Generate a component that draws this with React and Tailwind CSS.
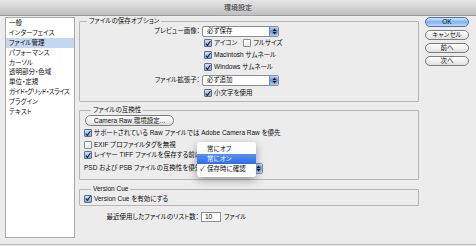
import React from 'react';

const FONT = "font-['Liberation_Sans','Noto_Sans_CJK_JP',sans-serif] [font-feature-settings:'palt']";

function Box({ on }) {
  return (
    <span
      className={
        on
          ? 'w-[8px] h-[8px] shrink-0 rounded-[1px] border border-[#5d6f8c] bg-gradient-to-b from-[#cfe1f7] to-[#7ea8dc] flex items-center justify-center'
          : 'w-[8px] h-[8px] shrink-0 rounded-[1px] border border-[#8a8a8a] bg-gradient-to-b from-white to-[#e8e8e8]'
      }
    >
      {on && (
        <svg width="7" height="7" viewBox="0 0 7 7">
          <path d="M1 3.6 L2.8 5.6 L6.4 0.6" fill="none" stroke="#1b2233" strokeWidth="1.3" />
        </svg>
      )}
    </span>
  );
}

function Check({ on, label, className = '' }) {
  return (
    <div className={`flex items-center gap-[2px] whitespace-nowrap ${className}`}>
      <Box on={on} />
      <span>{label}</span>
    </div>
  );
}

function Stepper() {
  return (
    <span className="ml-auto w-[9px] h-full shrink-0 rounded-r-[2px] bg-gradient-to-b from-[#b5d2f5] via-[#5d9be8] to-[#a9cdf6] border-l border-[#6a88b3] flex items-center justify-center">
      <svg width="5" height="7" viewBox="0 0 5 7">
        <path d="M2.5 0.5 L4.5 3 L0.5 3 Z" fill="#111" />
        <path d="M2.5 6.5 L4.5 4 L0.5 4 Z" fill="#111" />
      </svg>
    </span>
  );
}

function Select({ value, className = '' }) {
  return (
    <div className={`h-[11px] shrink-0 bg-white border border-[#8d8d8d] rounded-[2px] flex items-center pl-[4px] whitespace-nowrap ${className}`}>
      {value && <span>{value}</span>}
      <Stepper />
    </div>
  );
}

function Btn({ children, blue }) {
  return (
    <div
      className={
        blue
          ? 'h-[10px] w-[44px] rounded-full border border-[#4f6f9e] bg-gradient-to-b from-[#d5e6fa] via-[#7fb2ef] to-[#c3ddfb] flex items-center justify-center'
          : 'h-[10px] w-[44px] rounded-full border border-[#7d7d7d] bg-gradient-to-b from-white via-[#f1f1f1] to-[#dedede] flex items-center justify-center'
      }
    >
      {children}
    </div>
  );
}

const items = [
  '一般',
  'インターフェイス',
  'ファイル管理',
  'パフォーマンス',
  'カーソル',
  '透明部分・色域',
  '単位・定規',
  'ガイド・グリッド・スライス',
  'プラグイン',
  'テキスト',
];

export default function App() {
  return (
    <div className={`relative w-[476px] h-[246px] overflow-hidden bg-[#ececec] text-[6.5px] leading-[8px] text-[#0d0d0d] ${FONT}`}>
      {/* title bar */}
      <div className="h-[16px] border-b border-[#9c9c9c] bg-gradient-to-b from-[#e6e6e6] to-[#bfbfbf] flex items-center justify-center text-[7px] text-[#333]">
        環境設定
      </div>

      <div className="flex h-[229px] border-b border-[#b9b9b9]">
        {/* sidebar list */}
        <ul className="ml-[5px] mt-[1px] w-[70px] h-[221px] bg-white border border-[#a9a9a9] whitespace-nowrap overflow-hidden">
          {items.map((it, i) => (
            <li
              key={it}
              className={
                i === 2
                  ? 'h-[9.9px] pl-[3px] flex items-center bg-[#c5d6f0]'
                  : i === 7
                  ? 'h-[9.9px] pl-[3px] flex items-center tracking-[-0.6px]'
                  : 'h-[9.9px] pl-[3px] flex items-center'
              }
            >
              {it}
            </li>
          ))}
        </ul>

        {/* main */}
        <div className="ml-[4px] w-[340px] flex flex-col">
          <fieldset className="mt-[1px] border border-[#b6b6b6] rounded-[1px] pb-[2px]">
            <legend className="ml-[7px] px-[2px] leading-[8px]">ファイルの保存オプション</legend>
            <div className="flex items-center h-[12px]">
              <span className="w-[122px] text-right pr-[2px]">プレビュー画像：</span>
              <Select value="必ず保存" className="w-[77px]" />
            </div>
            <div className="pl-[124px]">
              <div className="flex items-center h-[12px] gap-[6px]">
                <Check on label="アイコン" />
                <Check label="フルサイズ" />
              </div>
              <Check on label="Macintosh サムネール" className="h-[12px]" />
              <Check on label="Windows サムネール" className="h-[12px]" />
            </div>
            <div className="flex items-center h-[14px]">
              <span className="w-[122px] text-right pr-[2px]">ファイル拡張子：</span>
              <Select value="必ず追加" className="w-[77px]" />
            </div>
            <div className="pl-[124px]">
              <Check on label="小文字を使用" className="h-[12px]" />
            </div>
          </fieldset>

          <fieldset className="mt-[4px] border border-[#b6b6b6] rounded-[1px] pl-[4px] pb-[3px]">
            <legend className="ml-[7px] px-[2px] leading-[8px]">ファイルの互換性</legend>
            <div className="h-[13px] flex items-center pl-[1px]">
              <div className="h-[11px] px-[8px] rounded-full border border-[#7d7d7d] bg-gradient-to-b from-white via-[#f1f1f1] to-[#dedede] flex items-center">
                Camera Raw 環境設定...
              </div>
            </div>
            <Check on label="サポートされている Raw ファイルでは Adobe Camera Raw を優先" className="h-[12px]" />
            <Check label="EXIF プロファイルタグを無視" className="h-[11px]" />
            <Check on label="レイヤー TIFF ファイルを保存する前に確認" className="h-[10px]" />
            <div className="h-[16px] flex items-center">
              <span className="w-[113px] whitespace-nowrap">PSD および PSB ファイルの互換性を優先</span>
              <Select className="w-[66px]" />
            </div>
          </fieldset>

          <fieldset className="mt-[5px] border border-[#b6b6b6] rounded-[1px] pl-[4px] pb-[1px]">
            <legend className="ml-[7px] px-[2px] leading-[8px]">Version Cue</legend>
            <Check on label="Version Cue を有効にする" className="h-[11px]" />
          </fieldset>

          <div className="mt-[5px] flex items-center h-[11px]">
            <span className="w-[122px] text-right pr-[2px] whitespace-nowrap">最近使用したファイルのリスト数：</span>
            <span className="w-[20px] h-[10px] bg-white border border-[#8d8d8d] pl-[3px] flex items-center">10</span>
            <span className="ml-[3px]">ファイル</span>
          </div>
        </div>

        {/* buttons */}
        <div className="ml-[6px] mt-[1px] flex flex-col gap-[3px]">
          <Btn blue>OK</Btn>
          <Btn>キャンセル</Btn>
          <Btn>前へ</Btn>
          <Btn>次へ</Btn>
        </div>
      </div>

      {/* open popup menu */}
      <div className="absolute left-[197px] top-[142px] w-[59px] h-[35px] bg-white/95 rounded-[3px] shadow-[0_3px_8px_rgba(0,0,0,0.35)] pt-[2px] whitespace-nowrap">
        <div className="h-[10px] pl-[10px] flex items-center">常にオフ</div>
        <div className="h-[10px] pl-[10px] flex items-center bg-gradient-to-b from-[#5a8ff3] to-[#2f6ce8] text-white">常にオン</div>
        <div className="h-[10px] pl-[3px] flex items-center">
          <span className="w-[7px]">✓</span>保存時に確認
        </div>
      </div>
    </div>
  );
}
